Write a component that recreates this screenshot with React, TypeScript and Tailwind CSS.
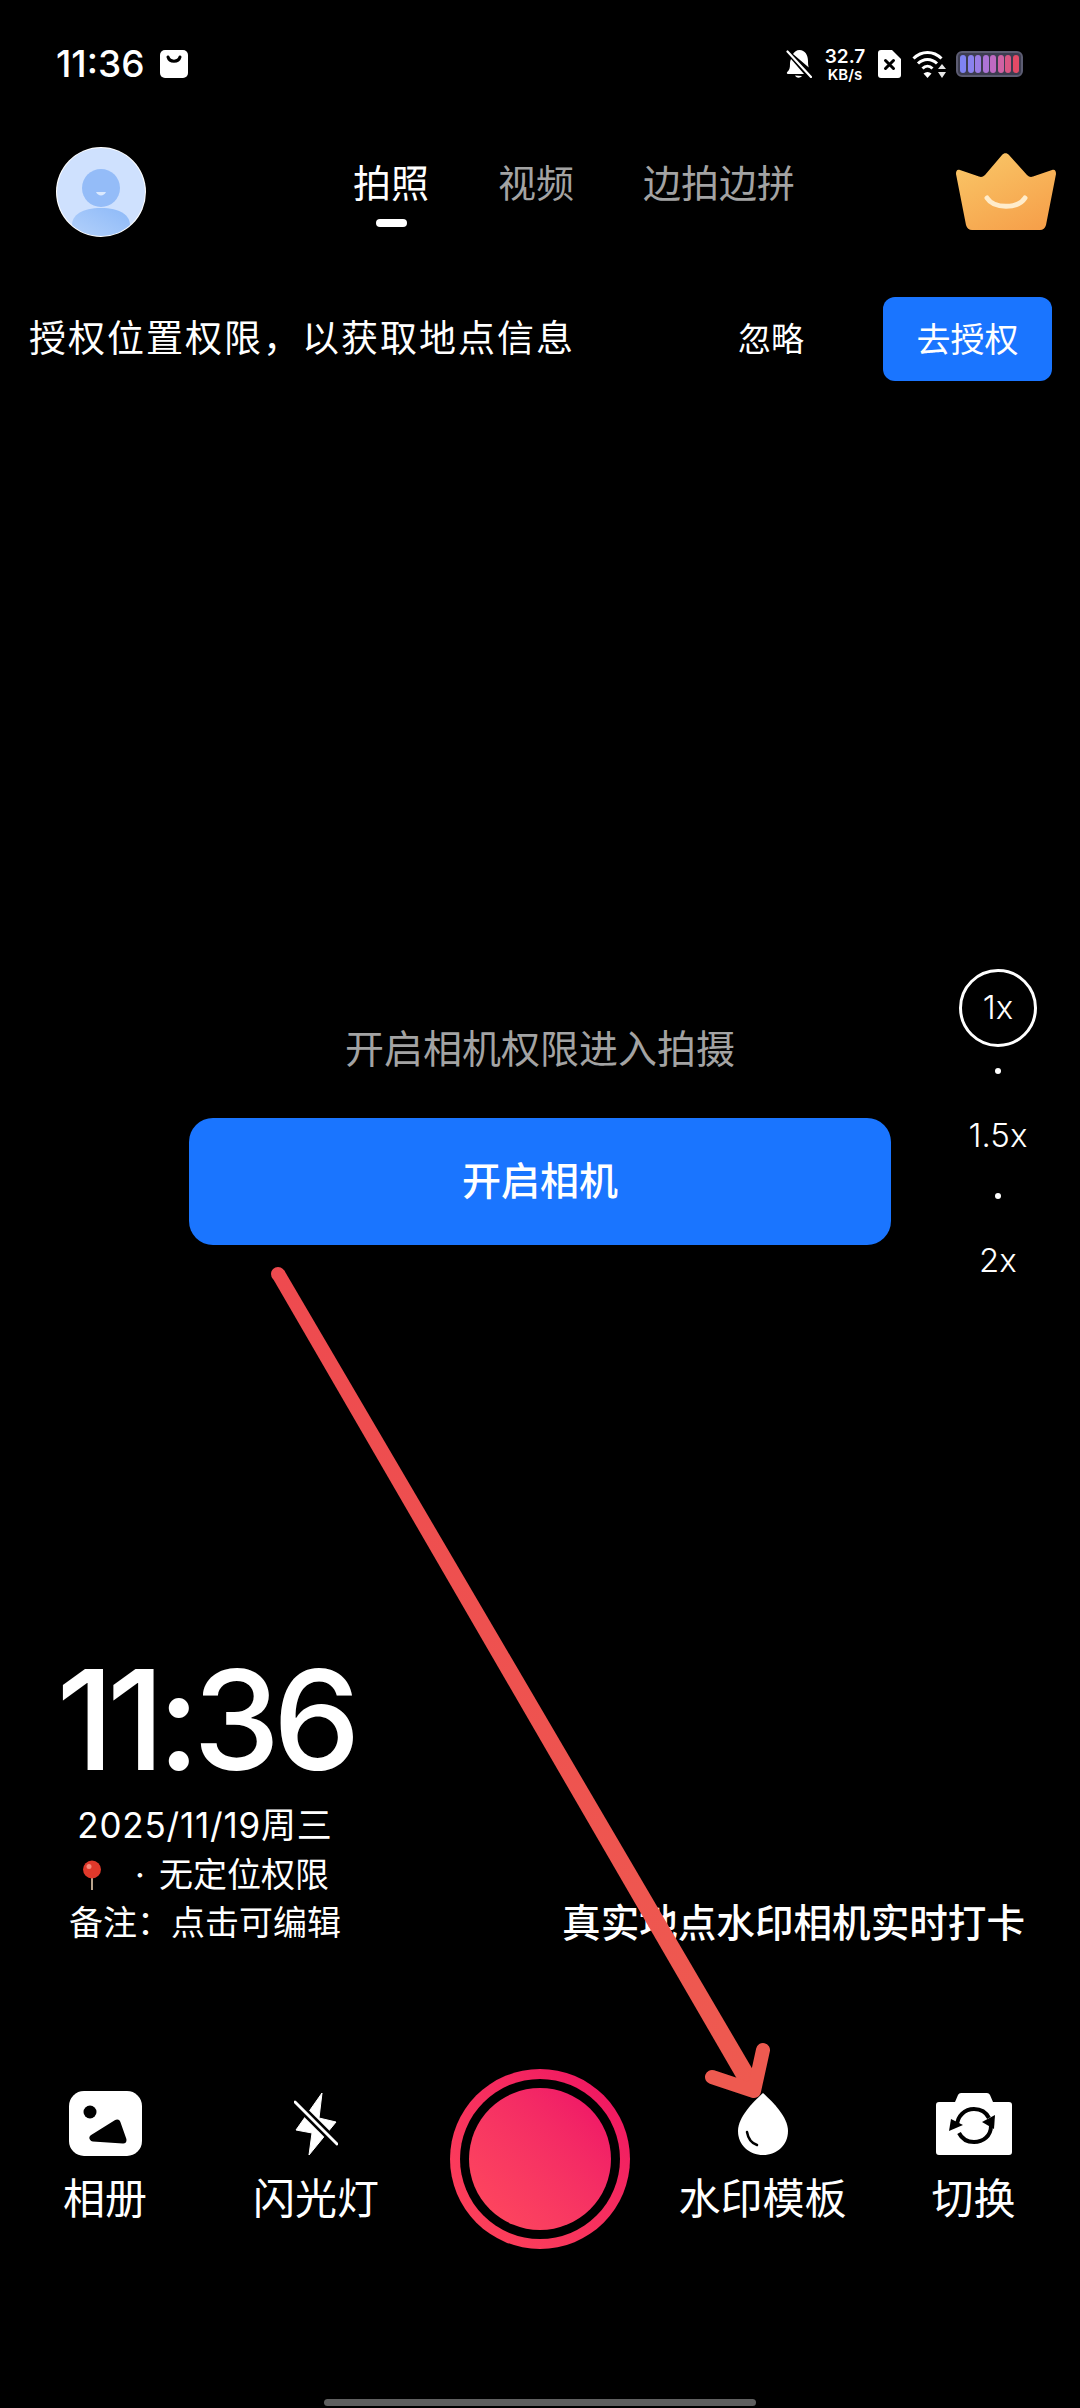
import React from "react";

function Bag() {
  return (
    <svg width="28" height="28" viewBox="0 0 28 28" className="ml-[16px]">
      <rect x="0" y="0" width="28" height="28" rx="5" fill="#fff" />
      <path d="M8 7c1.500 5.500 10.500 5.500 12 0" fill="none" stroke="#000" strokeWidth="3" strokeLinecap="round" />
    </svg>
  );
}

function BellMuted() {
  return (
    <svg width="26" height="28" viewBox="0 0 26 28">
      <path d="M5 9L18 24H2c-1 0-1.600-1-.8-2C3.500 20 4 18 4 14c0-2 .3-3.500 1-5z" fill="#fff" />
      <path d="M7 4c1.500-2.200 3.500-4 6.500-4C19 0 22 5 22 11c0 3 .2 5 .8 6.500z" fill="#fff" />
      <path d="M9 25.500c.6 2 4.500 3.500 7 .5z" fill="#fff" />
      <path d="M1.500 1.500L25 27" stroke="#fff" strokeWidth="2.200" strokeLinecap="round" />
    </svg>
  );
}

function Sim() {
  return (
    <svg width="23" height="28" viewBox="0 0 23 28">
      <path d="M3 0h11l9 9v16a3 3 0 0 1-3 3H3a3 3 0 0 1-3-3V3a3 3 0 0 1 3-3z" fill="#fff" />
      <path d="M7.500 10.500l8 8M15.500 10.500l-8 8" stroke="#000" strokeWidth="3" strokeLinecap="round" />
    </svg>
  );
}

function Wifi() {
  return (
    <svg width="34" height="28" viewBox="0 0 34 28">
      <path d="M1.500 8.500C9.500 .5 21.500 .5 29.500 8.500" fill="none" stroke="#fff" strokeWidth="3" />
      <path d="M6 13.500c5.500-5.500 13.500-5.500 19 0" fill="none" stroke="#fff" strokeWidth="3" />
      <path d="M10.500 18.500c3-3 7-3 10 0" fill="none" stroke="#fff" strokeWidth="3" />
      <path d="M11.500 23.500c2.500-2 5.500-2 8 0l-4 4.500z" fill="#fff" />
      <path d="M30 14l4 5h-8zM30 28l4-6h-8z" fill="#fff" opacity="0.9" />
    </svg>
  );
}

function Battery() {
  const cells = ["#7f83f2", "#8a82ef", "#9a7de6", "#ac74d6", "#bf6ac2", "#cf62a4", "#da5684", "#e34a66"];
  return (
    <div className="flex h-[26px] w-[67px] items-center justify-center gap-[1.500px] rounded-[6px] border-[2px] border-[#5c5c72] bg-[#3c3c50]">
      {cells.map((c) => (
        <span key={c} className="h-[18px] w-[6px] rounded-[3px]" style={{ backgroundColor: c }} />
      ))}
    </div>
  );
}

function Avatar() {
  return (
    <svg width="90" height="90" viewBox="0 0 90 90">
      <defs>
        <clipPath id="avatarClip">
          <circle cx="45" cy="45" r="44" />
        </clipPath>
        <linearGradient id="avatarBody" x1="0" y1="1" x2="1" y2="0">
          <stop offset="0" stopColor="#b5d2fb" />
          <stop offset="1" stopColor="#8db9f8" />
        </linearGradient>
      </defs>
      <circle cx="45" cy="45" r="45" fill="#fff" />
      <circle cx="45" cy="45" r="44" fill="#cfe1fe" />
      <g clipPath="url(#avatarClip)">
        <circle cx="45" cy="41" r="19" fill="#94bcf8" />
        <path d="M40 45c2 4.500 8 4.500 10 0z" fill="#dbe9fe" />
        <path d="M16 78c0-10 10-17 29-17s29 7 29 17v14H16z" fill="url(#avatarBody)" />
      </g>
    </svg>
  );
}

function Crown() {
  return (
    <svg width="100" height="77" viewBox="0 0 100 77">
      <defs>
        <linearGradient id="crownFill" x1="0.2" y1="0" x2="0.8" y2="1">
          <stop offset="0" stopColor="#f9c566" />
          <stop offset="1" stopColor="#f6a04a" />
        </linearGradient>
      </defs>
      <path
        d="M46 2C48 -.5 51 -.5 53 2L71 22C73 24 75 24.500 77 23.500L96 17C99 16 100 18 100 21L90 72C89 75.500 87 77 84 77H16C13 77 11 75.500 10 72L0 21C0 18 1 16 4 17L23 23.500C25 24.500 27 24 29 22Z"
        fill="url(#crownFill)"
      />
      <path d="M31 45C38 56 62 56 69 45" fill="none" stroke="#ffeccb" strokeWidth="5" strokeLinecap="round" />
    </svg>
  );
}

function Album() {
  return (
    <svg width="73" height="65" viewBox="0 0 73 65">
      <rect x="0" y="0" width="73" height="65" rx="15" fill="#fff" />
      <circle cx="21" cy="21" r="6.500" fill="#000" />
      <path d="M48 32L24 47 54 49z" fill="#000" stroke="#000" strokeWidth="7" strokeLinejoin="round" />
    </svg>
  );
}

function FlashOff() {
  return (
    <svg width="44" height="62" viewBox="0 0 44 62">
      <path d="M28 0L2 37l16 3-3 22 27-33-17-4z" fill="#fff" stroke="#fff" strokeWidth="1" strokeLinejoin="round" />
      <path d="M1 9L43 51" stroke="#000" strokeWidth="8" />
      <path d="M1 9L43 51" stroke="#fff" strokeWidth="3" strokeLinecap="round" />
    </svg>
  );
}

function Drop() {
  return (
    <svg width="50" height="62" viewBox="0 0 50 62">
      <path d="M25 0C35 9 50 24 50 38 50 52 39 62 25 62 11 62 0 52 0 38 0 24 15 9 25 0Z" fill="#fff" />
      <path d="M9 39C10 45 13 50 19 52" fill="none" stroke="#000" strokeWidth="2.500" strokeLinecap="round" />
    </svg>
  );
}

function SwitchCamera() {
  return (
    <svg width="76" height="62" viewBox="0 0 76 62">
      <path
        d="M3 9H19L22 2C22.500 .8 24 0 25 0H51C52 0 53.500 .8 54 2L57 9H73C75 9 76 10 76 12V59C76 61 75 62 73 62H3C1 62 0 61 0 59V12C0 10 1 9 3 9Z"
        fill="#fff"
      />
      <path d="M21 33C21 23 29 16 38 16 45 16 50 19 53 25" fill="none" stroke="#000" strokeWidth="4" />
      <path d="M60 22L59 36 47 29z" fill="#000" transform="translate(-1 0)" />
      <path d="M55 33C55 43 47 49 38 49 31 49 26 46 23 40" fill="none" stroke="#000" strokeWidth="4" />
      <path d="M13 38L15 26 27 32z" fill="#000" />
    </svg>
  );
}

function ToolItem({ icon, label }: { icon: React.ReactNode; label: string }) {
  return (
    <div className="flex flex-col items-center pt-[22px]">
      <div className="flex h-[65px] items-center">{icon}</div>
      <span className="mt-[19px] text-[42px] leading-[48px] text-white">{label}</span>
    </div>
  );
}

function Arrow() {
  return (
    <svg className="pointer-events-none absolute left-0 top-0" width="1080" height="2408" viewBox="0 0 1080 2408">
      <defs>
        <linearGradient id="arrowFill" gradientUnits="userSpaceOnUse" x1="274" y1="1270" x2="754" y2="2092">
          <stop offset="0" stopColor="#ee4a4f" />
          <stop offset="1" stopColor="#ee5a50" />
        </linearGradient>
      </defs>
      <circle cx="278" cy="1274" r="7" fill="#ee4a4f" />
      <polygon points="272,1277 284,1270 760,2082 744,2091" fill="url(#arrowFill)" />
      <path d="M712 2077L754 2091 763 2050" fill="none" stroke="#ee5a50" strokeWidth="14" strokeLinecap="round" strokeLinejoin="round" />
    </svg>
  );
}

export default function App() {
  return (
    <div className="relative flex h-[2408px] w-[1080px] flex-col overflow-hidden bg-black pt-[50px] font-['Inter','Noto_Sans_CJK_SC',sans-serif] text-white">
      {/* status bar */}
      <div className="flex h-[28px] items-center justify-between pl-[56px] pr-[57px]">
        <div className="flex items-center">
          <span className="text-[37px] font-medium leading-[28px]">11:36</span>
          <Bag />
        </div>
        <div className="flex items-center">
          <BellMuted />
          <div className="ml-[12px] flex w-[42px] flex-col items-center font-semibold">
            <span className="text-[19px] leading-[20px]">32.7</span>
            <span className="text-[15px] leading-[15px]">KB/s</span>
          </div>
          <div className="ml-[12px]">
            <Sim />
          </div>
          <div className="ml-[11px]">
            <Wifi />
          </div>
          <div className="ml-[10px]">
            <Battery />
          </div>
        </div>
      </div>

      {/* nav */}
      <div className="mt-[69px] flex h-[90px] items-start pl-[56px] pr-[24px]">
        <Avatar />
        <div className="ml-[207px] flex pt-[12px]">
          <div className="flex w-[76px] flex-col items-center">
            <span className="text-[38px] leading-[48px]">拍照</span>
            <span className="mt-[12px] h-[8px] w-[31px] rounded-full bg-white" />
          </div>
          <span className="ml-[69px] text-[38px] leading-[48px] text-[#a3a3a3]">视频</span>
          <span className="ml-[69px] text-[38px] leading-[48px] text-[#a3a3a3]">边拍边拼</span>
        </div>
        <div className="ml-auto mt-[6px]">
          <Crown />
        </div>
      </div>

      {/* permission banner */}
      <div className="mt-[60px] flex h-[84px] items-center pl-[29px] pr-[28px]">
        <span className="text-[37px] tracking-[2px] leading-[48px]">授权位置权限，以获取地点信息</span>
        <span className="ml-auto text-[33px] leading-[40px]">忽略</span>
        <button className="ml-[79px] flex h-[84px] w-[169px] items-center justify-center rounded-[12px] bg-[#1a75ff] text-[34px] text-white">
          去授权
        </button>
      </div>

      {/* camera area */}
      <div className="relative mt-[644px] flex flex-col items-center">
        <span className="text-[39px] leading-[48px] text-[#a3a3a3]">开启相机权限进入拍摄</span>
        <button className="mt-[45px] flex h-[127px] w-[702px] items-center justify-center rounded-[24px] bg-[#1a75ff] text-[39px] font-medium text-white">
          开启相机
        </button>
        <div className="absolute left-[959px] top-[-56px] flex w-[78px] flex-col items-center text-[33px] font-light">
          <span className="flex h-[78px] w-[78px] items-center justify-center rounded-full border-[3px] border-white">1x</span>
          <span className="mt-[21px] h-[6px] w-[6px] rounded-full bg-white" />
          <span className="mt-[41px] leading-[40px]">1.5x</span>
          <span className="mt-[38px] h-[6px] w-[6px] rounded-full bg-white" />
          <span className="mt-[41px] leading-[40px]">2x</span>
        </div>
      </div>

      {/* watermark */}
      <div className="mt-[394px] flex items-end justify-between pl-[55px] pr-[55px]">
        <div className="flex w-[300px] flex-col items-center">
          <span className="text-[139px] font-medium leading-[162px] tracking-[-7px]">11:36</span>
          <span className="text-[35px] tracking-[0.8px] leading-[49px]">2025/11/19周三</span>
          <span className="flex h-[49px] items-center text-[34px]">
            <svg width="22" height="30" viewBox="0 0 22 30">
              <path d="M11 14V30" stroke="#b9a48c" strokeWidth="2" />
              <circle cx="11" cy="9.500" r="9" fill="#e0392b" />
              <circle cx="8" cy="6.500" r="2.500" fill="#f58a7c" />
            </svg>
            <span className="ml-[32px] mr-[14px]">·</span>
            无定位权限
          </span>
          <span className="text-[34px] leading-[48px]">备注：点击可编辑</span>
        </div>
        <span className="text-[38.6px] font-medium leading-[48px]">真实地点水印相机实时打卡</span>
      </div>

      {/* toolbar */}
      <div className="mt-[122px] grid h-[180px] grid-cols-[210px_212px_236px_209px_213px]">
        <ToolItem icon={<Album />} label="相册" />
        <ToolItem icon={<FlashOff />} label="闪光灯" />
        <div className="flex justify-center">
          <div className="flex h-[180px] w-[180px] items-center justify-center rounded-full bg-gradient-to-bl from-[#ee0a63] to-[#ff4458]">
            <div className="flex h-[160px] w-[160px] items-center justify-center rounded-full bg-black">
              <div className="h-[142px] w-[142px] rounded-full bg-gradient-to-bl from-[#ee0a68] to-[#ff4a5c]" />
            </div>
          </div>
        </div>
        <ToolItem icon={<Drop />} label="水印模板" />
        <ToolItem icon={<SwitchCamera />} label="切换" />
      </div>

      {/* home indicator */}
      <div className="mt-[150px] h-[7px] w-[432px] self-center rounded-full bg-[#5f5f5f]" />

      <Arrow />
    </div>
  );
}
